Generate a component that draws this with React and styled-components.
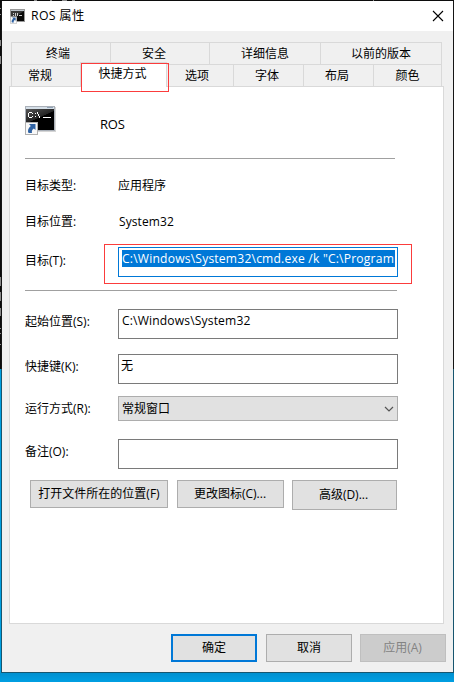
import React from "react";
import styled, { createGlobalStyle } from "styled-components";

const GlobalStyle = createGlobalStyle`
  * { box-sizing: border-box; }
  body { margin: 0; overflow: hidden; }
`;

const Desktop = styled.div`
  position: relative;
  width: 454px;
  height: 682px;
  padding: 1px 0 0 1px;
  background: linear-gradient(to bottom, #0c0c0c 369px, #00a0e2 369px, #00a0e2 672px, #0090d0 673px, #009fe2 682px);
  font: 12px/16px "Open Sans", "Noto Sans CJK SC", sans-serif;
  color: #000;
`;

const Console = styled.svg`
  position: absolute;
  left: 0;
  top: 0;
`;

const Window = styled.div`
  position: relative;
  width: 453px;
  height: 672px;
  border: 1px solid;
  border-top: 0;
  border-color: #1a1a1a;
  border-image: linear-gradient(to bottom, #151515 368px, #17566f 368px) 1;
  border-image-width: 0 1px 1px 1px;
  background: #f0f0f0;
`;

const TitleBar = styled.header`
  display: flex;
  align-items: center;
  height: 30px;
  padding: 0 9px 0 8px;
  background: #fff;
`;

const Title = styled.h1`
  flex: 1;
  margin: 0 0 0 5px;
  font: inherit;
  font-size: 12.3px;
  letter-spacing: 0.3px;
`;

const TabRow = styled.div`
  display: flex;
  width: 431px;
  height: 22px;
  margin-left: 9px;
  margin-top: ${(p) => p.$top || 0}px;
  border: 1px solid #d9d9d9;
  border-bottom: 0;
`;

const Tab = styled.div`
  width: ${(p) => p.$w}px;
  padding-right: ${(p) => p.$shift || 0}px;
  border-right: 1px solid #d9d9d9;
  line-height: 22px;
  text-align: center;
  &:last-child { border-right: 0; }
`;

const ActiveTab = styled(Tab)`
  position: relative;
  z-index: 1;
  height: 25px;
  margin-top: -3px;
  margin-left: -1px;
  border: 1px solid #d9d9d9;
  border-bottom: 0;
  background: #fff;
`;

const Page = styled.main`
  width: 435px;
  height: 538px;
  margin-left: 7px;
  padding: 0 0 0 15px;
  border: 1px solid #d9d9d9;
  background: #fff;
`;

const Heading = styled.div`
  display: flex;
  height: 71px;
  padding-top: 19px;
`;

const ShortcutName = styled.div`
  margin: 10px 0 0 43px;
  font-size: 13px;
  letter-spacing: -0.2px;
`;

const Divider = styled.hr`
  width: ${(p) => p.$w}px;
  height: 1px;
  margin: 0;
  border: 0;
  background: #a0a0a0;
`;

const Row = styled.div`
  display: flex;
  align-items: center;
  height: ${(p) => p.$h}px;
  margin-top: ${(p) => p.$top}px;
`;

const Label = styled.label`
  width: 93px;
  padding-bottom: ${(p) => p.$lift || 0}px;
  white-space: nowrap;
`;

const Location = styled.span`
  padding-left: 1px;
  letter-spacing: 0.1px;
`;

const Field = styled.div`
  width: 280px;
  height: 30px;
  padding: 2px 3px;
  border: 1px solid ${(p) => (p.$focus ? "#0078d7" : "#7a7a7a")};
  background: #fff;
  font-size: 12.1px;
  line-height: 18px;
  letter-spacing: 0.15px;
  white-space: nowrap;
`;

const KeyField = styled(Field)`
  padding-left: 2px;
`;

const Selection = styled.div`
  width: 273px;
  height: 17px;
  background: #0078d7;
  color: #fff;
  letter-spacing: 0.2px;
`;

const Select = styled.div`
  display: flex;
  align-items: center;
  justify-content: space-between;
  width: 280px;
  height: 25px;
  padding: 0 3px;
  border: 1px solid #adadad;
  background: #e1e1e1;
`;

const Button = styled.button`
  width: ${(p) => p.$w}px;
  height: ${(p) => p.$h || 28}px;
  padding: 0 ${(p) => p.$shift || 0}px 0 0;
  border: ${(p) => (p.$primary ? "2px solid #0078d7" : "1px solid #adadad")};
  background: #e1e1e1;
  color: #000;
  font: inherit;
  white-space: nowrap;
  &:disabled {
    border-color: #bfbfbf;
    background: #ccc;
    color: #838383;
  }
`;

const Actions = styled.div`
  display: flex;
  align-items: flex-start;
  margin: 11px 0 0 5px;
  > :nth-child(2) { margin-left: 9px; }
  > :nth-child(3) { margin-left: 8px; }
`;

const Footer = styled.footer`
  display: flex;
  margin: 10px 0 0 169px;
  > :nth-child(2) { margin-left: 9px; }
  > :nth-child(3) { margin-left: 8px; }
`;

const Highlight = styled.div`
  position: absolute;
  z-index: 2;
  left: ${(p) => p.$x}px;
  top: ${(p) => p.$y}px;
  width: ${(p) => p.$w}px;
  height: ${(p) => p.$h}px;
  border: 1px solid #fb3c3c;
`;

const ShortcutArrow = ({ y = 0 }) => (
  <g transform={`translate(0 ${y})`}>
    <rect x="0.5" y="0.5" width="12" height="12" fill="#f8f8f8" stroke="#b0b0b0" />
    <path d="M4 2h6.500v6L8.800 6.400C7 7.600 6.600 9 7 11H3.500C2.200 8.500 3.500 6 5.800 4z" fill="#2f62a3" />
  </g>
);

const CmdIcon = () => (
  <svg width="32" height="32" viewBox="0 0 32 32">
    <defs>
      <linearGradient id="gloss" x1="0" y1="0" x2="0.6" y2="1">
        <stop offset="0" stopColor="#555" />
        <stop offset="0.5" stopColor="#242424" />
        <stop offset="0.52" stopColor="#000" />
      </linearGradient>
    </defs>
    <rect x="1" y="1" width="30" height="25" fill="#d5d5d5" />
    <rect x="0" y="0" width="30" height="25" fill="#aab0b8" />
    <rect x="1" y="1" width="28" height="2" fill="#d5dfe8" />
    <path d="M22.500 1.500h1m1 0h1m1 0h1" stroke="#4c6582" />
    <rect x="1" y="3" width="28" height="21" fill="url(#gloss)" />
    <path d="M4 6.500h3M3.500 7v4M4 11.500h3M7 7.500h1M7 10.500h1M10 7.500h1M10 10.500h1M12.500 6v2M13.500 8v2M14.500 10v2M18 11.500h8" stroke="#fff" />
    <ShortcutArrow y={16} />
  </svg>
);

const SmallCmdIcon = () => (
  <svg width="16" height="16" viewBox="0 0 16 16">
    <rect x="0.5" y="1.500" width="14" height="12" fill="#080808" stroke="#999" />
    <path d="M1 2.500h13" stroke="#bcc4cc" />
    <path d="M1 3h13L5 9H1z" fill="#383838" />
    <path d="M3 5.500h1M3 7.500h1M5.500 5v3M7.500 5v3M9 7.500h3" stroke="#ccc" />
    <g transform="translate(0 8.500) scale(.54)"><ShortcutArrow /></g>
  </svg>
);

const CloseIcon = () => (
  <svg width="12" height="12" viewBox="0 0 12 12">
    <path d="M1 1l10 10M11 1L1 11" stroke="#000" strokeWidth="1.100" />
  </svg>
);

const Chevron = () => (
  <svg width="10" height="8" viewBox="0 0 10 8">
    <path d="M1 2l4 4 4-4" fill="none" stroke="#555" strokeWidth="1.200" />
  </svg>
);

export default function App() {
  return (
    <Desktop>
      <GlobalStyle />
      <Console width="454" height="369" viewBox="0 0 454 369">
        <path d="M0 8.500h2M0 14.500h2M34 0.500h3M50 0.500h2M62 0.500h5M72 0.500h3M373 0.500h1M0.500 40v6M0.500 56v8M0.500 277v9M0.500 292v9M0.500 308v8M0 328.500h2M0 333.500h1M0 344.500h2" stroke="#8a8a8a" />
      </Console>
      <Window>
        <TitleBar>
          <SmallCmdIcon />
          <Title>ROS 属性</Title>
          <CloseIcon />
        </TitleBar>
        <TabRow $top={11}>
          <Tab $w={99} $shift={6}>终端</Tab>
          <Tab $w={99} $shift={12}>安全</Tab>
          <Tab $w={111}>详细信息</Tab>
          <Tab $w={120}>以前的版本</Tab>
        </TabRow>
        <TabRow>
          <Tab $w={69} $shift={12}>常规</Tab>
          <ActiveTab $w={87} $shift={2}>快捷方式</ActiveTab>
          <Tab $w={67} $shift={6}>选项</Tab>
          <Tab $w={70} $shift={3}>字体</Tab>
          <Tab $w={70} $shift={3}>布局</Tab>
          <Tab $w={67}>颜色</Tab>
        </TabRow>
        <Page>
          <Heading>
            <CmdIcon />
            <ShortcutName>ROS</ShortcutName>
          </Heading>
          <Divider $w={370} />
          <Row $h={16} $top={19}>
            <Label>目标类型:</Label>
            <span>应用程序</span>
          </Row>
          <Row $h={16} $top={20}>
            <Label>目标位置:</Label>
            <Location>System32</Location>
          </Row>
          <Row $h={30} $top={17}>
            <Label $lift={2}>目标(T):</Label>
            <Field $focus>
              <Selection>C:\Windows\System32\cmd.exe /k "C:\Program</Selection>
            </Field>
          </Row>
          <Row $h={1} $top={13}>
            <Divider $w={372} />
          </Row>
          <Row $h={30} $top={18}>
            <Label $lift={4}>起始位置(S):</Label>
            <Field>C:\Windows\System32</Field>
          </Row>
          <Row $h={30} $top={15}>
            <Label $lift={4}>快捷键(K):</Label>
            <KeyField>无</KeyField>
          </Row>
          <Row $h={25} $top={12}>
            <Label>运行方式(R):</Label>
            <Select>
              常规窗口
              <Chevron />
            </Select>
          </Row>
          <Row $h={30} $top={18}>
            <Label $lift={4}>备注(O):</Label>
            <Field />
          </Row>
          <Actions>
            <Button $w={138}>打开文件所在的位置(F)</Button>
            <Button $w={107} $shift={1}>更改图标(C)...</Button>
            <Button $w={105} $h={30} $shift={2}>高级(D)...</Button>
          </Actions>
        </Page>
        <Footer>
          <Button $w={86} $primary>确定</Button>
          <Button $w={86}>取消</Button>
          <Button $w={86} $shift={1} disabled>应用(A)</Button>
        </Footer>
        <Highlight $x={79} $y={62} $w={88} $h={29} />
        <Highlight $x={102} $y={243} $w={308} $h={40} />
      </Window>
    </Desktop>
  );
}
